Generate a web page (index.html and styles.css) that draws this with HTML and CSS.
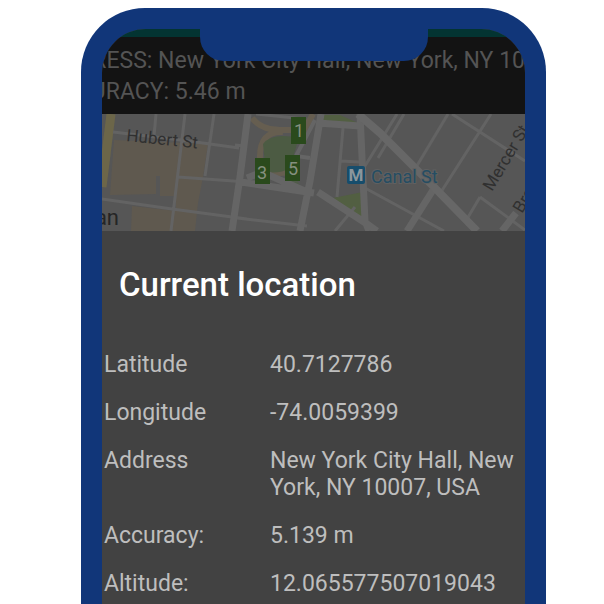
FILE: index.html
```html
<!DOCTYPE html>
<html lang="en">
<head>
<meta charset="utf-8">
<meta name="viewport" content="width=device-width, initial-scale=1">
<title>Current location</title>
<link rel="stylesheet" href="styles.css">
</head>
<body>
<main class="phone">
  <div class="notch"></div>
  <div class="screen">
    <div class="statusbar"></div>
    <header class="banner">
      <p class="banner-line address">ADDRESS: New York City Hall, New York, NY 10</p>
      <p class="banner-line accuracy">ACCURACY: 5.46 m</p>
    </header>
    <svg class="map" viewBox="0 0 423 117" preserveAspectRatio="xMidYMid slice" role="img" aria-label="Map around Canal St">
      <rect width="423" height="117" fill="#565656"/>
      <g fill="#5f594f">
        <path d="M12 26L106 30L101 63L96 89L93 117H29L30 92L74 97V82H58V62H54V80L8 81Z"/>
      </g>
      <path d="M9 0L0 73" stroke="#6c6649" stroke-width="9"/>
      <path d="M150 4Q160 17 181 16L202 16L211 0M181 18Q157 17 158 45L162 60L192 58" fill="none" stroke="#665e50" stroke-width="6"/>
      <path d="M161 30Q167 22 181 22L197 23L188 54Q178 60 164 58Z" fill="#4c5b43"/>
      <path d="M222 1H238L256 9L219 8ZM231 84L261 78V104Z" fill="#525f42"/>
      <path d="M178 67L194 64L198 72Z" fill="#525c4c"/>
      <g fill="none" stroke="#636363" stroke-width="3">
        <path d="M11 18L79 26L137 34M54 0L52 22M83 0L69 117M112 0L103 62M76 63L145 68M0 85L70 95L145 105M133 31L144 32M135 104L205 112M241 14L235 83M238 47L258 48M253 93L233 117M302 0L276 44M346 0L313 55M389 0L339 78M350 0L423 47M378 83L365 105M378 83L423 116M263 74L342 117M154 0L202 5M295 0L263 52"/>
      </g>
      <g fill="none" stroke="#656565" stroke-width="7">
        <path d="M146 0L138 63L130 117M139 68L212 79M145 64L160 58L205 78M219 0L208 67L198 117M216 9L258 12M258 0L263 107L267 117M216 78L265 110L275 117M331 76L305 117M414 99L400 117"/>
        <path d="M213 6L194 42L208 44" stroke-width="4"/>
      </g>
      <path d="M256 0L278 19L331 72L375 117" fill="none" stroke="#676767" stroke-width="8"/>
      <g fill="#2a4a1c">
        <path d="M189 3h15v27h-15zM183 41h15v26h-15zM153 44h15v26h-15z"/>
      </g>
      <g class="pin-number" text-anchor="middle">
        <text x="197" y="23">1</text>
        <text x="191" y="61">5</text>
        <text x="160" y="65">3</text>
      </g>
      <rect x="245" y="52" width="18" height="18" rx="2" fill="#164d6c"/>
      <text class="metro" x="254" y="67" text-anchor="middle">M</text>
      <text class="station" x="269" y="69">Canal St</text>
      <g class="street">
        <text transform="translate(24 27) rotate(6)">Hubert St</text>
        <text transform="translate(390 78) rotate(-59)">Mercer St</text>
        <text transform="translate(420 100) rotate(-59)">Broadway</text>
      </g>
      <text class="district" x="17" y="111" text-anchor="end">Manhattan</text>
    </svg>
    <section class="sheet">
      <h1 class="title">Current location</h1>
      <dl class="details">
        <dt>Latitude</dt><dd>40.7127786</dd>
        <dt>Longitude</dt><dd>-74.0059399</dd>
        <dt>Address</dt><dd>New York City Hall, New York, NY 10007, USA</dd>
        <dt>Accuracy:</dt><dd>5.139 m</dd>
        <dt>Altitude:</dt><dd>12.065577507019043</dd>
      </dl>
    </section>
  </div>
</main>
</body>
</html>
```
FILE: styles.css
```css
* {
  box-sizing: border-box;
}

html,
body {
  height: 100%;
}

body {
  margin: 0;
  padding: 8px 58px 0 81px;
  overflow: hidden;
  background: #ffffff;
  font-family: Roboto, "Liberation Sans", sans-serif;
  font-size: 23px;
  line-height: 27px;
}

.phone {
  position: relative;
  min-height: 100%;
  display: flex;
  padding: 21px 21px 0;
  border-radius: 64px 64px 0 0;
  background: #113679;
}

.notch {
  position: absolute;
  z-index: 1;
  top: 0;
  left: 50%;
  width: 228px;
  height: 53px;
  transform: translateX(-50%);
  border-radius: 0 0 24px 24px;
  background: #113679;
}

.screen {
  flex: 1;
  min-width: 0;
  display: flex;
  flex-direction: column;
  overflow: hidden;
  border-radius: 44px 44px 0 0;
  background: #424242;
}

.statusbar {
  height: 8px;
  background: #033432;
}

.banner {
  display: flex;
  flex-direction: column;
  gap: 4px;
  padding: 10px 0 9px;
  background: #131313;
  color: #545454;
}

.banner-line {
  display: flex;
  margin: 0;
  white-space: nowrap;
}

.address {
  justify-content: flex-end;
}

.accuracy {
  margin-left: -56px;
}

.map {
  display: block;
  width: 100%;
  height: 117px;
}

.pin-number {
  fill: #85907f;
  font-size: 18px;
}

.metro {
  fill: #8b969c;
  font-size: 17px;
  font-weight: 700;
}

.station {
  fill: #254d63;
  stroke: #606060;
  stroke-width: 2px;
  paint-order: stroke;
  font-size: 18px;
}

.street {
  fill: #303030;
  font-size: 17px;
}

.district {
  fill: #252525;
  font-size: 22px;
}

.sheet {
  flex: 1;
  padding: 34px 2px 0;
  background: #424242;
}

.title {
  margin: 0;
  padding-left: 15px;
  color: #ffffff;
  font-size: 33px;
  font-weight: 500;
  line-height: 40px;
}

.details {
  display: grid;
  grid-template-columns: 145px 1fr;
  gap: 21px;
  margin: 46px 0 0;
  color: #bebebe;
}

.details dt,
.details dd {
  margin: 0;
}
```
